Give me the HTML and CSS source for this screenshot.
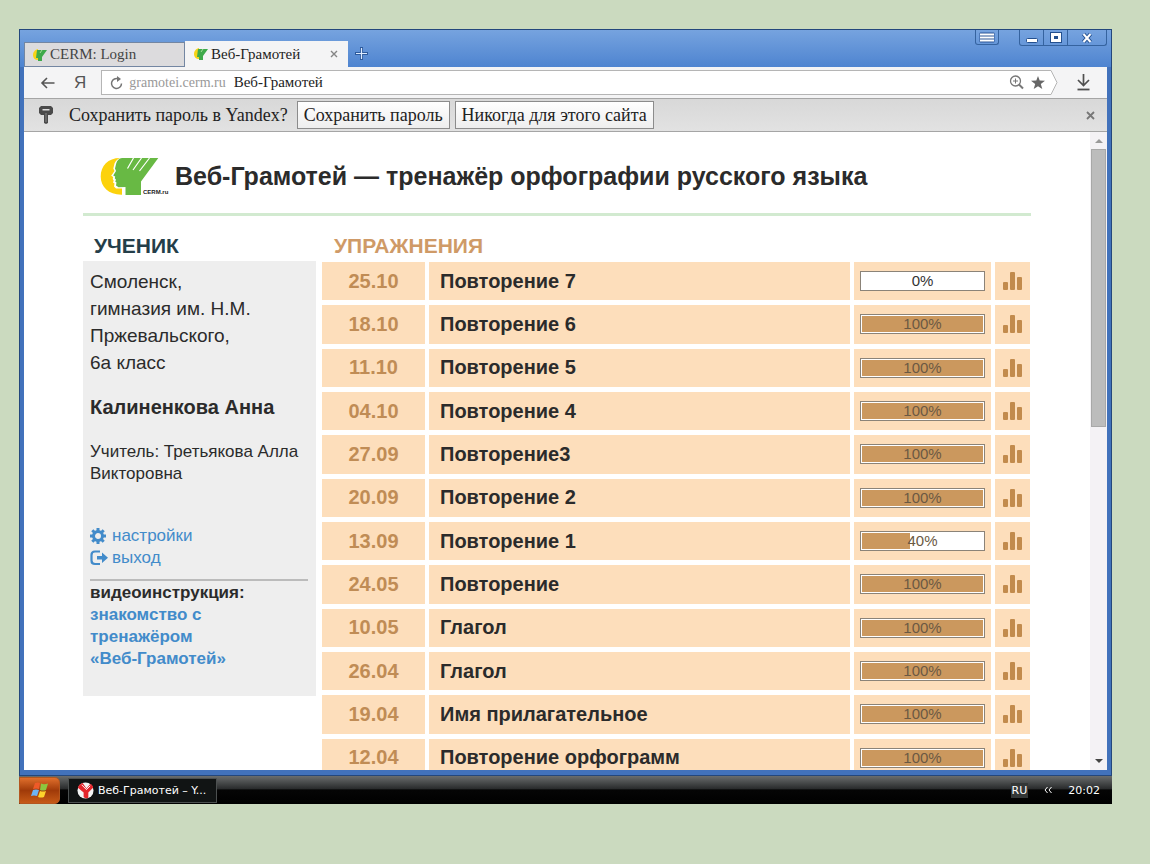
FILE: index.html
```html
<!DOCTYPE html>
<html lang="ru">
<head>
    <meta charset="UTF-8">
    <meta name="viewport" content="width=device-width, initial-scale=1.0">
    <title>Веб-Грамотей</title>
    <link rel="stylesheet" href="styles.css">
</head>
<body>
    <!-- shared icons -->
    <svg class="sprite" aria-hidden="true">
        <symbol id="leaf" viewBox="0 0 14 12">
            <path d="M5 0C1 1 0 4 0 6c0 3 2 5 5 5z" fill="#f7d417"/>
            <path d="M4 1l10 0-5 7v4H5V9H3z" fill="#3faa4b"/>
            <path d="M7 4l2-3" stroke="#a9dc9c" stroke-width="1"/>
        </symbol>
        <symbol id="bars" viewBox="0 0 19 18">
            <rect x="0" y="10" width="5" height="8" rx="1"/>
            <rect x="7" y="0" width="5" height="18" rx="1"/>
            <rect x="14" y="5" width="5" height="13" rx="1"/>
        </symbol>
    </svg>

    <div class="desktop">
        <div class="window">
            <div class="titlebar">
                <div class="tabs">
                    <button class="tab"><svg class="favicon"><use href="#leaf"/></svg>CERM: Login</button>
                    <button class="tab active"><svg class="favicon"><use href="#leaf"/></svg>Веб-Грамотей
                        <svg class="tab-close" viewBox="0 0 8 8"><path d="M1 1l6 6M7 1l-6 6" stroke="#858585" stroke-width="1.4"/></svg>
                    </button>
                    <button class="new-tab" aria-label="Новая вкладка">
                        <svg viewBox="0 0 13 13"><path d="M6.500 0v13M0 6.500h13" stroke="#2d5a9c" stroke-width="3"/><path d="M6.500 1v11M1 6.500h11" stroke="#dcebff" stroke-width="1.200"/></svg>
                    </button>
                </div>
                <div class="window-buttons">
                    <button class="menu" aria-label="Меню">
                        <svg viewBox="0 0 16 11"><rect x=".5" y=".5" width="15" height="10" rx="1" fill="#2c5797"/><path d="M1 2.500h14M1 5.500h14M1 8.500h14" stroke="#fff" stroke-width="1.800"/></svg>
                    </button>
                    <div class="group">
                        <button aria-label="Свернуть"><svg viewBox="0 0 12 12"><rect x=".5" y="6.500" width="11" height="4" rx="1" fill="#fff" stroke="#24508f"/></svg></button>
                        <button aria-label="Развернуть"><svg viewBox="0 0 12 12"><rect x="2" y="2" width="8" height="7" fill="none" stroke="#24508f" stroke-width="4"/><rect x="2" y="2" width="8" height="7" fill="#fff" stroke="#fff" stroke-width="2"/><rect x="4" y="4" width="4" height="3" fill="#24508f"/></svg></button>
                        <button class="wide" aria-label="Закрыть"><svg viewBox="0 0 12 12"><path d="M2.500 2l7 8M9.500 2l-7 8" stroke="#24508f" stroke-width="4"/><path d="M2.500 2l7 8M9.500 2l-7 8" stroke="#fff" stroke-width="2"/></svg></button>
                    </div>
                </div>
            </div>

            <div class="toolbar">
                <button aria-label="Назад"><svg class="back" viewBox="0 0 14 12"><path d="M14 6H2M6.500 1L1.500 6l5 5" fill="none" stroke="#555" stroke-width="1.600"/></svg></button>
                <button class="ya">Я</button>
                <label class="address">
                    <svg class="reload" viewBox="0 0 13 14"><path d="M11.500 7.500a5 5 0 1 1-3-4.600" fill="none" stroke="#747474" stroke-width="1.500"/><path d="M7 0l4 3-4 3z" fill="#747474"/></svg>
                    <span>gramotei.cerm.ru</span>
                    <input type="text" value="Веб-Грамотей" aria-label="Адрес">
                    <svg class="magnify" viewBox="0 0 15 15"><circle cx="6.500" cy="6" r="5" fill="none" stroke="#777" stroke-width="1.300"/><path d="M6.500 3.500v5M4 6h5" stroke="#777"/><path d="M10 9.500l4 4" stroke="#777" stroke-width="2"/></svg>
                    <svg class="star" viewBox="0 0 14 13"><path d="M7 0l1.700 4.600 5.300.2-4.200 3.200 1.500 5L7 10.200 2.700 13l1.500-5L0 4.800l5.300-.2z" fill="#666"/></svg>
                </label>
                <svg class="tip" viewBox="0 0 9 25"><path d="M0 .5h2l6 12-6 12H0" fill="#fff" stroke="#b5b5b5"/></svg>
                <button class="download" aria-label="Загрузки"><svg viewBox="0 0 14 17"><path d="M7 0v11M1.500 6L7 11.500 12.500 6" fill="none" stroke="#4f4f4f" stroke-width="1.700"/><path d="M1 15.500h12" stroke="#4f4f4f" stroke-width="1.800"/></svg></button>
            </div>

            <div class="savebar">
                <svg class="key" viewBox="0 0 14 18"><path d="M2 0h10l2 2v5l-2 2H9v8l-2 1-2-1V9H2L0 7V2z" fill="#4a4a4a"/><path d="M3.500 3h7v1.500h-7z" fill="#ddd"/><path d="M7 7v9" stroke="#888"/></svg>
                <span>Сохранить пароль в Yandex?</span>
                <button class="answer">Сохранить пароль</button>
                <button class="answer">Никогда для этого сайта</button>
                <button class="dismiss" aria-label="Закрыть"><svg viewBox="0 0 9 9"><path d="M1 1l7 7M8 1L1 8" stroke="#777" stroke-width="1.800"/></svg></button>
            </div>

            <div class="view">
                <div class="page">
                    <header>
                        <svg class="logo" viewBox="0 0 66 40">
                            <path d="M20 2C8 2 .7 10 .7 20.500.7 31 9 39 22 38.700V32.500h-6l-2-2 .5-3-1.500-1 .7-2-1-1.500.5-2-2-1.200L14.500 15l-1.200-2.500 1.200-5C15.500 5 17.500 3 20 2z" fill="#fcd20c"/>
                            <path d="M22 2h36.300L41 25.500V39H25.500v-8l-7 .3-2.500-1.800.5-3-1.300-1 .8-1.700-1.200-1.600.4-1.700-2-1.100L16 15l-1-2.500 1.200-5C17.200 4 19 2.500 22 2z" fill="#68b944"/>
                            <path d="M33.500 2L27.500 12.500M41.500 2L33 14M49.500 2L39.500 15" stroke="#fff" stroke-width="1.200"/>
                            <text x="43" y="38">CERM.ru</text>
                        </svg>
                        <h1>Веб-Грамотей — тренажёр орфографии русского языка</h1>
                    </header>

                    <div class="columns">
                        <aside>
                            <h2>УЧЕНИК</h2>
                            <div class="student">
                                <p class="school">Смоленск,<br>гимназия им. Н.М.<br>Пржевальского,<br>6а класс</p>
                                <p class="name">Калиненкова Анна</p>
                                <p class="teacher">Учитель: Третьякова Алла Викторовна</p>
                                <div class="links">
                                    <a href="#"><svg viewBox="0 0 18 16"><circle cx="8" cy="8" r="4.500" fill="none" stroke="#428bca" stroke-width="3"/><path d="M8 0v3M8 13v3M0 8h3M13 8h3M2.300 2.300l2.200 2.200M11.500 11.500l2.200 2.200M2.300 13.700l2.200-2.200M11.500 4.500l2.200-2.200" stroke="#428bca" stroke-width="3"/></svg>настройки</a>
                                    <a href="#"><svg viewBox="0 0 18 16"><path d="M10 1.500H5Q1.500 1.500 1.500 5v5.500Q1.500 14 5 14h5" fill="none" stroke="#428bca" stroke-width="2.200"/><path d="M7 6h5V2.500l6 5.300-6 5.200V9.500H7z" fill="#428bca"/></svg>выход</a>
                                </div>
                                <p class="video">видеоинструкция:<br><a href="#">знакомство с<br>тренажёром<br>«Веб-Грамотей»</a></p>
                            </div>
                        </aside>

                        <main>
                            <h2>УПРАЖНЕНИЯ</h2>
                            <table>
                                <tr><td class="date">25.10</td><td class="title">Повторение 7</td><td class="result"><div class="bar empty"><div class="fill" style="width: 0%"></div><span>0%</span></div></td><td class="stat"><a href="#" aria-label="Статистика"><svg><use href="#bars"/></svg></a></td></tr>
                                <tr><td class="date">18.10</td><td class="title">Повторение 6</td><td class="result"><div class="bar"><div class="fill" style="width: 100%"></div><span>100%</span></div></td><td class="stat"><a href="#" aria-label="Статистика"><svg><use href="#bars"/></svg></a></td></tr>
                                <tr><td class="date">11.10</td><td class="title">Повторение 5</td><td class="result"><div class="bar"><div class="fill" style="width: 100%"></div><span>100%</span></div></td><td class="stat"><a href="#" aria-label="Статистика"><svg><use href="#bars"/></svg></a></td></tr>
                                <tr><td class="date">04.10</td><td class="title">Повторение 4</td><td class="result"><div class="bar"><div class="fill" style="width: 100%"></div><span>100%</span></div></td><td class="stat"><a href="#" aria-label="Статистика"><svg><use href="#bars"/></svg></a></td></tr>
                                <tr><td class="date">27.09</td><td class="title">Повторение3</td><td class="result"><div class="bar"><div class="fill" style="width: 100%"></div><span>100%</span></div></td><td class="stat"><a href="#" aria-label="Статистика"><svg><use href="#bars"/></svg></a></td></tr>
                                <tr><td class="date">20.09</td><td class="title">Повторение 2</td><td class="result"><div class="bar"><div class="fill" style="width: 100%"></div><span>100%</span></div></td><td class="stat"><a href="#" aria-label="Статистика"><svg><use href="#bars"/></svg></a></td></tr>
                                <tr><td class="date">13.09</td><td class="title">Повторение 1</td><td class="result"><div class="bar"><div class="fill" style="width: 40%"></div><span>40%</span></div></td><td class="stat"><a href="#" aria-label="Статистика"><svg><use href="#bars"/></svg></a></td></tr>
                                <tr><td class="date">24.05</td><td class="title">Повторение</td><td class="result"><div class="bar"><div class="fill" style="width: 100%"></div><span>100%</span></div></td><td class="stat"><a href="#" aria-label="Статистика"><svg><use href="#bars"/></svg></a></td></tr>
                                <tr><td class="date">10.05</td><td class="title">Глагол</td><td class="result"><div class="bar"><div class="fill" style="width: 100%"></div><span>100%</span></div></td><td class="stat"><a href="#" aria-label="Статистика"><svg><use href="#bars"/></svg></a></td></tr>
                                <tr><td class="date">26.04</td><td class="title">Глагол</td><td class="result"><div class="bar"><div class="fill" style="width: 100%"></div><span>100%</span></div></td><td class="stat"><a href="#" aria-label="Статистика"><svg><use href="#bars"/></svg></a></td></tr>
                                <tr><td class="date">19.04</td><td class="title">Имя прилагательное</td><td class="result"><div class="bar"><div class="fill" style="width: 100%"></div><span>100%</span></div></td><td class="stat"><a href="#" aria-label="Статистика"><svg><use href="#bars"/></svg></a></td></tr>
                                <tr><td class="date">12.04</td><td class="title">Повторение орфограмм</td><td class="result"><div class="bar"><div class="fill" style="width: 100%"></div><span>100%</span></div></td><td class="stat"><a href="#" aria-label="Статистика"><svg><use href="#bars"/></svg></a></td></tr>
                            </table>
                        </main>
                    </div>
                </div>
                <div class="scrollbar">
                    <svg viewBox="0 0 8 4"><path d="M4 0l4 4H0z" fill="#999"/></svg>
                    <div class="track"><div class="thumb"></div></div>
                    <svg viewBox="0 0 8 4"><path d="M0 0h8L4 4z" fill="#444"/></svg>
                </div>
            </div>
        </div>

        <footer class="taskbar">
            <button class="start" aria-label="Пуск">
                <svg viewBox="0 0 18 16"><path d="M4 1q3-1 5 0L8 7q-3-1-6 0z" fill="#ef5a28"/><path d="M10 1.500q3 1.500 7 0L15 8q-3 1-6 0z" fill="#8cc63f"/><path d="M2 8q3-1 6 0l-2 6q-3-1-6 0z" fill="#6db4f5"/><path d="M9 9q3 1 6 0l-2 6q-3 1-6 0z" fill="#fdd32c"/></svg>
            </button>
            <button class="task">
                <svg viewBox="0 0 18 18"><circle cx="9" cy="9" r="8.500" fill="#f4f4f4"/><path d="M1 6Q2 2 6 1l4 6 4-5q3 1 3 4l-5 5v6q-3 1-5-1v-5z" fill="#e3252b"/><path d="M5 3l5 5 4-4" fill="none" stroke="#fff"/></svg>
                Веб-Грамотей – Y...
            </button>
            <div class="tray">
                <span class="lang">RU</span>
                <svg viewBox="0 0 8 6"><path d="M3.500 0L1 3l2.500 3M7.500 0L5 3l2.500 3" fill="none" stroke="#fff"/></svg>
                <span>20:02</span>
            </div>
        </footer>
    </div>
</body>
</html>
```

FILE: styles.css
```css
* {
    box-sizing: border-box;
}

body {
    margin: 0;
    height: 100vh;
    padding: 29px 38px 60px 19px;
    background-color: #cbdabf;
    font-family: "Liberation Sans", Arial, sans-serif;
    color: #2b2b2b;
}

button {
    background: none;
    border: none;
    padding: 0;
    font: inherit;
    color: inherit;
    cursor: pointer;
}

svg {
    flex-shrink: 0;
}

a {
    color: #428bca;
    text-decoration: none;
}

.sprite {
    display: none;
}

.desktop {
    height: 100%;
    display: flex;
    flex-direction: column;
}

/* browser window */
.window {
    flex: 1;
    min-height: 0;
    display: flex;
    flex-direction: column;
    background-color: #4272bb;
    border: 1px solid #24477c;
    padding: 0 4px 5px;
    font-family: "Liberation Serif", "Times New Roman", serif;
}

.titlebar {
    display: flex;
    justify-content: space-between;
    align-items: flex-start;
    height: 37px;
    margin: 0 -4px;
    padding: 0 4px;
    background: linear-gradient(#76a3df, #4e84d0);
}

.tabs {
    display: flex;
    align-items: flex-end;
    height: 37px;
}

.tab {
    display: flex;
    align-items: center;
    width: 161px;
    height: 25px;
    padding: 0 8px;
    background-color: #dcdbdd;
    border: 1px solid #7386a2;
    color: #444;
    font-size: 15px;
}

.tab.active {
    width: 163px;
    height: 26px;
    padding-right: 9px;
    background-color: #f4f4f5;
    border-color: #f4f4f5;
    color: #222;
}

.favicon {
    width: 14px;
    height: 12px;
    margin-right: 3px;
}

.tab-close {
    width: 8px;
    height: 8px;
    margin-left: auto;
}

.new-tab {
    width: 26px;
    height: 25px;
}

.new-tab svg {
    width: 13px;
    height: 13px;
}

.window-buttons {
    display: flex;
    gap: 20px;
}

.window-buttons button {
    display: flex;
    align-items: center;
    justify-content: center;
    width: 24px;
    height: 15px;
    border-right: 1px solid #35639f;
}

.window-buttons svg {
    width: 12px;
    height: 12px;
}

.window-buttons .menu {
    border: 1px solid #35639f;
    border-top: none;
    border-radius: 0 0 3px 3px;
}

.window-buttons .menu svg {
    width: 16px;
    height: 11px;
}

.group {
    display: flex;
    border: 1px solid #35639f;
    border-top: none;
    border-radius: 0 0 3px 3px;
}

.window-buttons .wide {
    width: 38px;
    border: none;
}

.toolbar {
    display: flex;
    align-items: center;
    height: 31px;
    padding: 0 16px;
    background-color: #f4f4f5;
}

.back {
    display: block;
    width: 15px;
    height: 12px;
}

.ya {
    margin: 0 15px 0 19px;
    font: 17px "Liberation Sans", Arial, sans-serif;
    color: #555;
}

.address {
    flex: 1;
    display: flex;
    align-items: center;
    height: 25px;
    padding: 0 4px 0 8px;
    background-color: #fff;
    border: 1px solid #b5b5b5;
    border-right: none;
    font-size: 14px;
    color: #999;
}

.address input {
    flex: 1;
    min-width: 0;
    margin: 0 8px;
    padding: 0;
    border: none;
    outline: none;
    background: none;
    font: inherit;
    font-size: 15px;
    color: #222;
}

.reload {
    width: 13px;
    height: 14px;
    margin-right: 6px;
}

.magnify {
    width: 15px;
    height: 15px;
    margin-right: 7px;
}

.star {
    width: 14px;
    height: 13px;
}

.tip {
    width: 9px;
    height: 25px;
}

.download {
    margin-left: 18px;
}

.download svg {
    display: block;
    width: 15px;
    height: 17px;
}

.savebar {
    display: flex;
    align-items: center;
    height: 34px;
    padding: 0 12px 0 15px;
    background: linear-gradient(#d8d8d8, #e2e2e2);
    border-top: 1px solid #a5a5a5;
    border-bottom: 1px solid #a5a5a5;
    font-size: 18px;
    color: #222;
}

.key {
    width: 14px;
    height: 18px;
    margin-right: 16px;
}

.answer {
    height: 28px;
    margin-left: 5px;
    padding: 0 6px;
    background: linear-gradient(#fff, #eee);
    border: 1px solid #8c8c8c;
}

span + .answer {
    margin-left: 9px;
}

.dismiss {
    margin-left: auto;
}

.dismiss svg {
    display: block;
    width: 9px;
    height: 9px;
}

.view {
    flex: 1;
    min-height: 0;
    display: flex;
    overflow: hidden;
    background-color: #fff;
    font-family: "Liberation Sans", Arial, sans-serif;
}

/* site */
.page {
    flex: 1;
    min-width: 0;
    padding: 0 59px;
}

header {
    display: flex;
    align-items: center;
    gap: 9px;
    height: 84px;
    padding: 6px 17px 0;
    border-bottom: 3px solid #d2ead0;
}

.logo {
    width: 66px;
    height: 40px;
    overflow: visible;
}

.logo text {
    font: bold 6px "Liberation Sans", Arial, sans-serif;
    fill: #222;
}

h1 {
    margin: 0;
    padding-top: 1px;
    font-size: 25px;
    white-space: nowrap;
}

h2 {
    margin: 0;
    padding: 19px 11px 0;
    font-size: 21px;
    line-height: 22px;
    height: 45px;
    color: #243e49;
}

main h2 {
    padding-left: 16px;
    color: #cf9a67;
    height: 41px;
}

.columns {
    display: grid;
    grid-template-columns: 233px 1fr;
    gap: 2px;
    align-items: start;
}

.student {
    padding: 7px 8px 26px 7px;
    background-color: #eee;
}

.student p {
    margin: 0;
}

.school {
    font-size: 19px;
    line-height: 27px;
}

.student .name {
    margin: 18px 0 20px;
    font-size: 20px;
    line-height: 27px;
    font-weight: bold;
}

.teacher {
    font-size: 17px;
    line-height: 22px;
}

.links {
    margin-top: 40px;
    padding-bottom: 10px;
    border-bottom: 2px solid #bbb;
}

.links a {
    display: flex;
    align-items: center;
    font-size: 17px;
    line-height: 22px;
}

.links svg {
    width: 18px;
    height: 16px;
    margin-right: 4px;
}

.video {
    padding-top: 1px;
    font-size: 17px;
    line-height: 22px;
    font-weight: bold;
}

main {
    margin-right: -3px;
}

table {
    width: 100%;
    height: 525px;
    border-spacing: 4px 5px;
    table-layout: fixed;
}

td {
    padding: 0;
    background-color: #fddebb;
    font-size: 20px;
    font-weight: bold;
}

.date {
    width: 103px;
    text-align: center;
    color: #c08c55;
}

.title {
    padding-left: 11px;
}

.result {
    width: 137px;
    padding: 0 6px;
}

.bar {
    position: relative;
    height: 20px;
    padding: 1px;
    background-color: #fff;
    border: 1px solid #8b8378;
}

.fill {
    height: 100%;
    background-color: #cb985e;
}

.bar span {
    position: absolute;
    inset: 0;
    font-size: 15px;
    font-weight: normal;
    line-height: 17px;
    text-align: center;
    color: #6b5943;
}

.bar.empty span {
    color: #333;
}

.stat {
    width: 35px;
    text-align: center;
}

.stat svg {
    display: block;
    width: 19px;
    height: 18px;
    margin: 0 auto;
    fill: #c28b4d;
}

.scrollbar {
    display: flex;
    flex-direction: column;
    align-items: center;
    width: 17px;
    padding: 7px 1px;
    background-color: #f4f2f5;
}

.scrollbar svg {
    width: 8px;
    height: 4px;
}

.track {
    flex: 1;
    width: 100%;
    padding: 6px 0;
}

.thumb {
    height: 46%;
    background-color: #bcbcbc;
    border: 1px solid #a8a8a8;
}

/* taskbar */
.taskbar {
    display: flex;
    align-items: center;
    height: 28px;
    background: linear-gradient(#6a6d6d, #2a2c2d 45%, #050505 50%, #000);
    color: #fff;
    font-family: "DejaVu Sans", Tahoma, sans-serif;
    font-size: 11px;
}

.start {
    width: 41px;
    height: 27px;
    border-radius: 0 5px 5px 0;
    border: 1px solid #b3561f;
    background: linear-gradient(#e06f2c, #a03a09 50%, #c65a17);
}

.start svg {
    display: block;
    width: 18px;
    height: 16px;
    margin: 0 auto;
}

.task {
    display: flex;
    align-items: center;
    gap: 4px;
    width: 149px;
    height: 25px;
    margin-left: 8px;
    padding: 0 8px;
    background-color: #111414;
    border: 1px solid #4c5050;
    white-space: nowrap;
}

.task svg {
    width: 17px;
    height: 17px;
}

.tray {
    display: flex;
    align-items: center;
    gap: 16px;
    margin-left: auto;
    padding-right: 12px;
}

.tray svg {
    width: 8px;
    height: 6px;
}

.lang {
    padding: 1px;
    background-color: #343737;
}
```
